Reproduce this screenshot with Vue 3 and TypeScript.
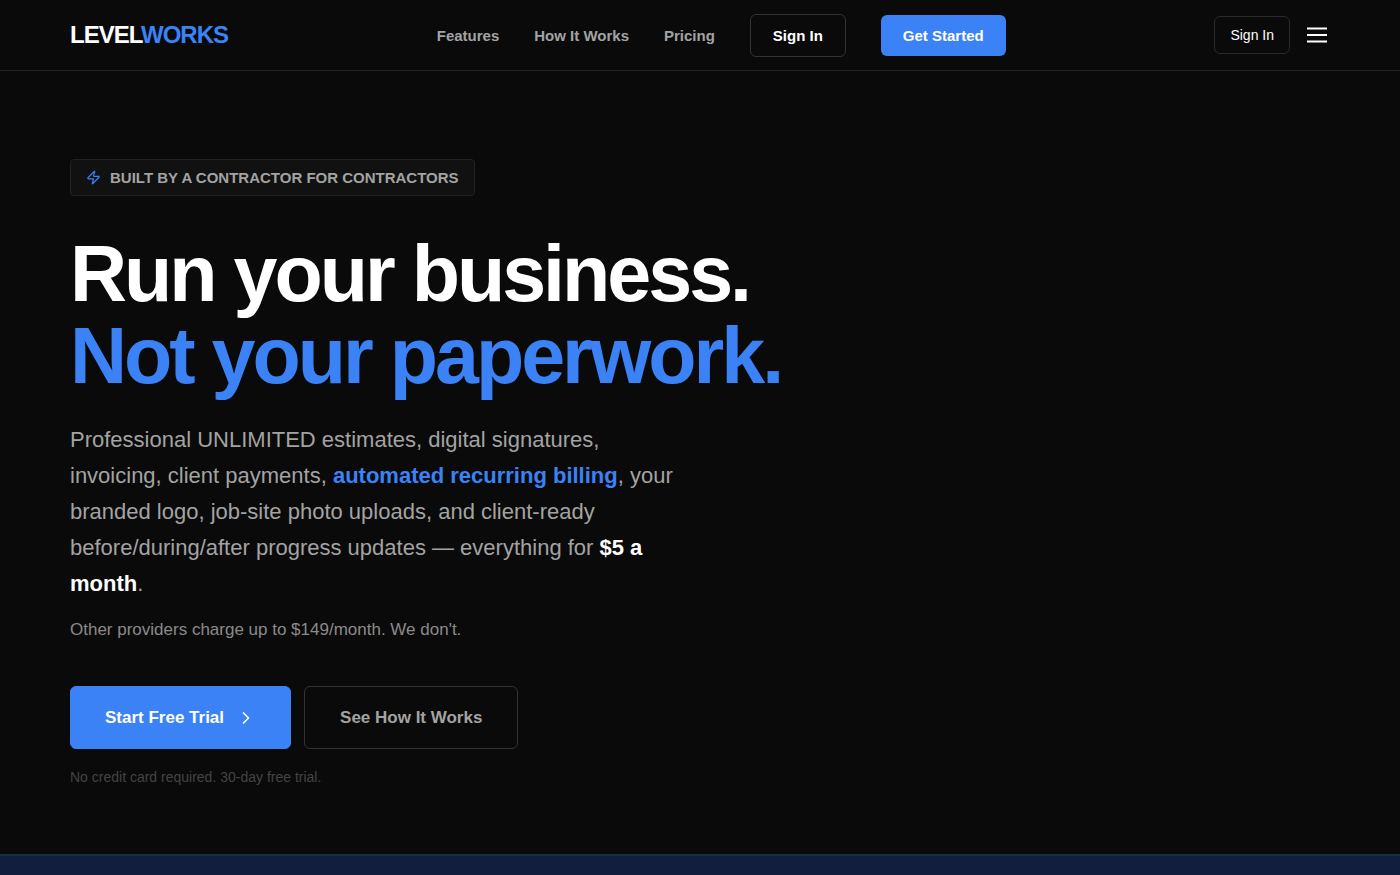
<script setup lang="ts">
interface NavLink {
  label: string
  href: string
}

const links: NavLink[] = [
  { label: 'Features', href: '#features' },
  { label: 'How It Works', href: '#how-it-works' },
  { label: 'Pricing', href: '#pricing' },
]
</script>

<template>
  <div class="page">
    <header class="header">
      <a class="logo" href="#">LEVEL<span class="accent">WORKS</span></a>
      <nav class="nav" aria-label="Main">
        <a v-for="link in links" :key="link.href" class="nav-link" :href="link.href">{{ link.label }}</a>
        <a class="nav-signin" href="#sign-in">Sign In</a>
        <a class="nav-start" href="#start">Get Started</a>
      </nav>
      <div class="actions">
        <a class="compact-signin" href="#sign-in">Sign In</a>
        <button class="menu" type="button" aria-label="Open menu">
          <svg width="26" height="26" viewBox="0 0 26 26" fill="none" stroke="currentColor" stroke-width="2">
            <path d="M3 6.5h20M3 13h20M3 19.5h20" />
          </svg>
        </button>
      </div>
    </header>

    <main class="hero">
      <div class="badge">
        <svg width="15" height="15" viewBox="0 0 24 24" fill="none" stroke="currentColor" stroke-width="2" stroke-linecap="round" stroke-linejoin="round" aria-hidden="true">
          <path d="M4 14a1 1 0 0 1-.78-1.63l9.9-10.2a.5.5 0 0 1 .86.46l-1.92 6.02A1 1 0 0 0 13 10h7a1 1 0 0 1 .78 1.63l-9.9 10.2a.5.5 0 0 1-.86-.46l1.92-6.02A1 1 0 0 0 11 14z" />
        </svg>
        <span>BUILT BY A CONTRACTOR FOR CONTRACTORS</span>
      </div>
      <h1>Run your business.<br /><span class="accent">Not your paperwork.</span></h1>
      <p class="lead">
        Professional UNLIMITED estimates, digital signatures, invoicing, client payments,
        <strong class="accent">automated recurring billing</strong>, your branded logo, job-site photo
        uploads, and client-ready before/during/after progress updates — everything for
        <strong>$5 a month</strong>.
      </p>
      <p class="compare">Other providers charge up to $149/month. We don't.</p>
      <div class="cta">
        <a class="cta-primary" href="#start">
          Start Free Trial
          <svg width="20" height="20" viewBox="0 0 24 24" fill="none" stroke="currentColor" stroke-width="2" stroke-linecap="round" stroke-linejoin="round" aria-hidden="true">
            <path d="m9 18 6-6-6-6" />
          </svg>
        </a>
        <a class="cta-secondary" href="#how-it-works">See How It Works</a>
      </div>
      <p class="note">No credit card required. 30-day free trial.</p>
    </main>

    <section class="band" aria-label="Highlights"></section>
  </div>
</template>

<style>
body {
  margin: 0;
  background: #0a0a0a;
}
</style>

<style scoped>
.page {
  display: flex;
  flex-direction: column;
  min-height: 100vh;
  background: #0a0a0a;
  color: #fff;
  font-family: "Liberation Sans", Arial, sans-serif;
}

a {
  color: inherit;
  text-decoration: none;
}

.header {
  display: flex;
  align-items: center;
  justify-content: space-between;
  box-sizing: border-box;
  min-height: 71px;
  padding: 0 70px;
  border-bottom: 1px solid #222;
}

.logo {
  font-size: 24px;
  font-weight: 700;
  letter-spacing: -1px;
}

.accent,
.lead .accent {
  color: #3b82f6;
}

.nav {
  display: flex;
  align-items: center;
  gap: 35px;
  font-size: 15px;
  font-weight: 700;
  line-height: 19px;
}

.nav-link {
  color: #a3a3a3;
}

.nav-signin {
  padding: 11px 22px;
  border: 1px solid #333;
  border-radius: 6px;
}

.nav-start {
  padding: 11px 22px;
  border-radius: 6px;
  background: #3b82f6;
}

.actions {
  display: flex;
  align-items: center;
  gap: 14px;
}

.compact-signin {
  padding: 9px 15px;
  border: 1px solid #2a2a2a;
  border-radius: 6px;
  font-size: 14px;
  line-height: 18px;
}

.menu {
  display: flex;
  padding: 0;
  border: 0;
  background: none;
  color: #fff;
}

.hero {
  padding: 88px 70px 67px;
}

.badge {
  display: flex;
  align-items: center;
  gap: 9px;
  width: fit-content;
  padding: 9px 15px;
  border: 1px solid #222;
  border-radius: 4px;
  background: #111;
  color: #a3a3a3;
  font-size: 15px;
  font-weight: 700;
  line-height: 17px;
}

.badge svg {
  color: #3b82f6;
}

h1 {
  margin: 37px 0 25px;
  font-size: 79px;
  font-weight: 700;
  line-height: 82px;
  letter-spacing: -3px;
}

p {
  margin: 0;
}

.lead {
  max-width: 612px;
  color: #a3a3a3;
  font-size: 22px;
  line-height: 36px;
}

.lead strong {
  color: #fff;
}

.compare {
  margin-top: 16px;
  color: #8a8a8a;
  font-size: 17px;
  line-height: 24px;
}

.cta {
  display: flex;
  gap: 13px;
  margin-top: 44px;
  font-size: 17px;
  font-weight: 700;
  line-height: 21px;
}

.cta-primary,
.cta-secondary {
  display: flex;
  align-items: center;
  gap: 12px;
  padding: 20px 34px;
  border: 1px solid #3b82f6;
  border-radius: 6px;
}

.cta-primary {
  background: #3b82f6;
}

.cta-secondary {
  padding: 20px 35px;
  border-color: #333;
  color: #a3a3a3;
}

.note {
  margin-top: 18px;
  color: #444;
  font-size: 14px;
  line-height: 20px;
}

.band {
  flex: 1;
  min-height: 19px;
  border-top: 2px solid #172d44;
  background: #111e3d;
}
</style>
